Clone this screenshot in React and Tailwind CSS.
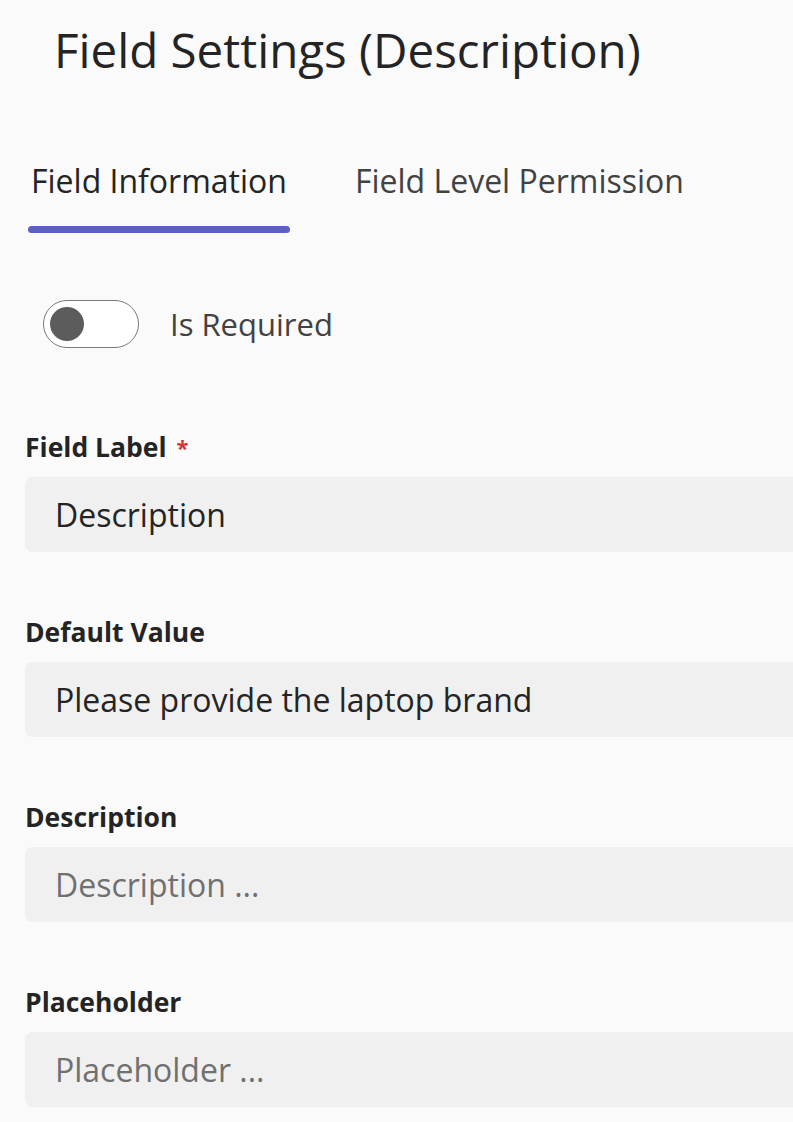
import React, { useState } from "react";

const FIELDS = [
  { label: "Field Label", required: true, value: "Description" },
  { label: "Default Value", value: "Please provide the laptop brand" },
  { label: "Description", placeholder: "Description ..." },
  { label: "Placeholder", placeholder: "Placeholder ..." },
];

function Toggle({ checked, onChange }) {
  return (
    <button
      type="button"
      onClick={() => onChange(!checked)}
      className="relative w-[96px] h-[48px] rounded-full border border-[#7a7a7a] bg-white shrink-0"
    >
      <span className="absolute left-[6px] top-[6px] w-[34px] h-[34px] rounded-full bg-[#5c5c5c]" />
    </button>
  );
}

export default function App() {
  const [tab, setTab] = useState(0);
  const [required, setRequired] = useState(false);

  return (
    <div
      className="min-h-screen w-full overflow-hidden bg-[#fafafa] text-[#242424]"
      style={{ fontFamily: '"Open Sans", "Noto Sans", sans-serif' }}
    >
      <h1 className="pl-[54px] pt-[21px] text-[47.5px] leading-[58px] font-medium">
        Field Settings (Description)
      </h1>

      {/* tabs */}
      <div className="flex mt-[82px] pl-[28px] gap-[62px]">
        {["Field Information", "Field Level Permission"].map((t, i) => (
          <button
            key={t}
            onClick={() => setTab(i)}
            className={
              "flex flex-col items-stretch text-[32px] leading-[40px] " +
              (tab === i ? "text-[#242424]" : "text-[#424242]")
            }
          >
            <span className="px-[3px]">{t}</span>
            <span
              className={
                "mt-[25px] h-[7px] rounded-full " +
                (tab === i ? "bg-[#5b5fc7]" : "bg-transparent")
              }
            />
          </button>
        ))}
      </div>

      <div className="flex items-center gap-[31px] mt-[67px] pl-[43px]">
        <Toggle checked={required} onChange={setRequired} />
        <span className="text-[31px] leading-[40px] text-[#424242]">Is Required</span>
      </div>

      <div className="flex flex-col mt-[83px] pl-[25px] -mr-[20px]">
        {FIELDS.map((f) => (
          <div key={f.label} className="flex flex-col mb-[64px]">
            <label className="text-[26.5px] leading-[32px] font-bold text-[#242424]">
              {f.label}
              {f.required && (
                <span className="text-[#d13438] ml-[10px] text-[22px] align-top">*</span>
              )}
            </label>
            <input
              defaultValue={f.value}
              placeholder={f.placeholder}
              className="mt-[14px] h-[75px] w-full rounded-[8px] bg-[#f0f0f0] pl-[30px] text-[32px] text-[#242424] placeholder:text-[#707070] outline-none"
            />
          </div>
        ))}
      </div>
    </div>
  );
}
